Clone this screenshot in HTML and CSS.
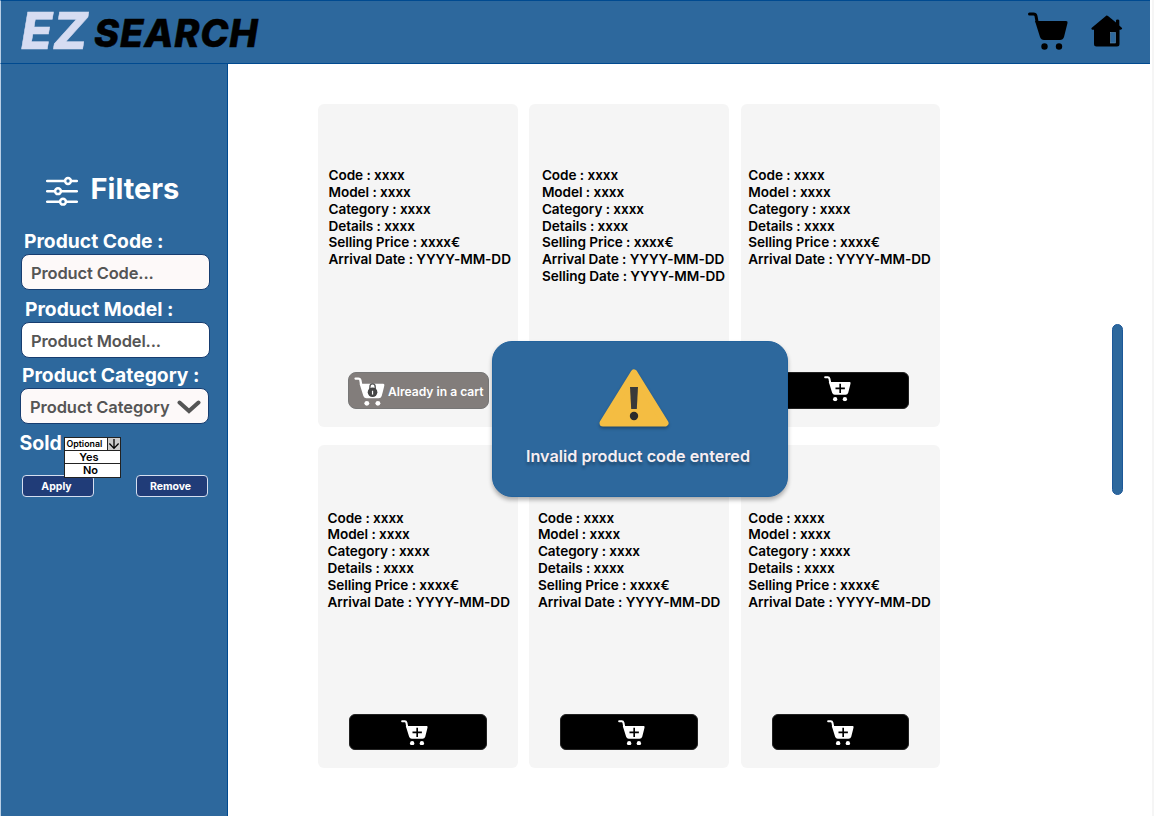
FILE: index.html
```html
<!DOCTYPE html>
<html lang="en">
<head>
<meta charset="utf-8">
<title>EZ Search</title>
<link rel="stylesheet" href="styles.css">
</head>
<body>
<svg class="defs" width="0" height="0" aria-hidden="true">
  <symbol id="cart" viewBox="0 0 40 38">
    <path d="M1.5 2H5.5Q7.5 2 8 4L9 9.500" fill="none" stroke="currentColor" stroke-width="3" stroke-linecap="round"/>
    <path d="M7 9H38Q40 9 39.500 11L36 25Q35 28 32 28H16Q13 28 12 25Z" fill="currentColor"/>
    <circle cx="16.500" cy="34.500" r="3.200" fill="currentColor"/>
    <circle cx="31" cy="34.500" r="3.200" fill="currentColor"/>
  </symbol>
  <symbol id="cart-add" viewBox="0 0 40 38">
    <use href="#cart" width="40" height="38"/>
    <path d="M24 11.500V25.500M17 18.500H31" stroke="#000" stroke-width="2.500"/>
  </symbol>
</svg>
<header class="topbar">
  <h1 class="logo"><span class="logo-ez">EZ</span><span class="logo-search">SEARCH</span></h1>
  <nav class="nav">
    <svg class="nav-cart"><use href="#cart"/></svg>
    <svg class="nav-home" viewBox="0 0 32 32"><path d="M15.500 .500Q16.200 .200 17 1L25 7.500V5.500Q25 4.500 26.500 4.500Q28.300 4.500 28.300 5.500V10.500L31 13Q31.500 14.500 29.500 14.700H28.500V29Q28.500 31.500 26 31.500H5.500Q3 31.500 3 29V14.700H1.500Q-.500 14.500 .800 12.700Z" fill="#000"/><rect x="19.500" y="17.500" width="5" height="10.500" fill="#2d689d" stroke="#5f8fb8" stroke-width=".6"/></svg>
  </nav>
</header>
<div class="layout">
  <aside class="sidebar">
    <div class="filters-head">
      <svg class="sliders" viewBox="0 0 32 30" fill="none" stroke="#fff" stroke-width="2.500" stroke-linecap="round"><path d="M1.200 5H18.500M25.500 5H30.800M1.200 15.200H8.500M15.500 15.200H30.800M1.200 25.700H13.500M20.500 25.700H30.800"/><circle cx="22" cy="5" r="2.900"/><circle cx="12" cy="15.200" r="2.900"/><circle cx="17" cy="25.700" r="2.900"/></svg>
      <h2 class="filters-title">Filters</h2>
    </div>
    <label class="label label-code">Product Code :</label>
    <div class="field field-code"><span>Product Code...</span></div>
    <label class="label label-model">Product Model :</label>
    <div class="field field-model"><span>Product Model...</span></div>
    <label class="label label-category">Product Category :</label>
    <div class="field field-category"><span>Product Category</span><svg class="chevron" viewBox="0 0 24 14"><path d="M2.500 2.500L12 11L21.500 2.500" fill="none" stroke="#555" stroke-width="4" stroke-linecap="round"/></svg></div>
    <div class="sold-row">
      <span class="sold">Sold</span>
      <div class="select">
        <div class="select-head"><span class="select-value">Optional</span><svg class="select-arrow" viewBox="0 0 13 12"><path d="M6.500 .500V10.500M1.500 5.500L6.500 10.800L11.500 5.500" fill="none" stroke="#000" stroke-width="1.400"/></svg></div>
        <div class="option option-yes">Yes</div>
        <div class="option option-no">No</div>
      </div>
    </div>
    <div class="actions"><button class="action">Apply</button><button class="action">Remove</button></div>
  </aside>
  <main class="main">
    <section class="grid">
      <article class="card c1"><p class="info">Code : xxxx<br>Model : xxxx<br>Category : xxxx<br>Details : xxxx<br>Selling Price : xxxx€<br>Arrival Date : YYYY-MM-DD</p>
        <button class="locked"><svg class="locked-icon" viewBox="0 0 40 38"><use href="#cart" width="40" height="38"/><path d="M20.500 17V13Q20.500 9 24 9Q27.500 9 27.500 13V17" fill="none" stroke="#555" stroke-width="1.800"/><circle cx="24" cy="20" r="6.300" fill="#454545"/><path d="M24 18V23" stroke="#fff" stroke-width="1.600"/></svg><span>Already in a cart</span></button></article>
      <article class="card c2"><p class="info">Code : xxxx<br>Model : xxxx<br>Category : xxxx<br>Details : xxxx<br>Selling Price : xxxx€<br>Arrival Date : YYYY-MM-DD<br>Selling Date : YYYY-MM-DD</p>
        <button class="add"><svg class="add-icon"><use href="#cart-add"/></svg></button></article>
      <article class="card c3"><p class="info">Code : xxxx<br>Model : xxxx<br>Category : xxxx<br>Details : xxxx<br>Selling Price : xxxx€<br>Arrival Date : YYYY-MM-DD</p>
        <button class="add"><svg class="add-icon"><use href="#cart-add"/></svg></button></article>
      <article class="card c4"><p class="info">Code : xxxx<br>Model : xxxx<br>Category : xxxx<br>Details : xxxx<br>Selling Price : xxxx€<br>Arrival Date : YYYY-MM-DD</p>
        <button class="add"><svg class="add-icon"><use href="#cart-add"/></svg></button></article>
      <article class="card c5"><p class="info">Code : xxxx<br>Model : xxxx<br>Category : xxxx<br>Details : xxxx<br>Selling Price : xxxx€<br>Arrival Date : YYYY-MM-DD</p>
        <button class="add"><svg class="add-icon"><use href="#cart-add"/></svg></button></article>
      <article class="card c6"><p class="info">Code : xxxx<br>Model : xxxx<br>Category : xxxx<br>Details : xxxx<br>Selling Price : xxxx€<br>Arrival Date : YYYY-MM-DD</p>
        <button class="add"><svg class="add-icon"><use href="#cart-add"/></svg></button></article>
    </section>
    <div class="scroll-thumb"></div>
  </main>
</div>
<div class="modal" role="alert">
  <svg class="warning" viewBox="0 0 72 60"><path d="M36 4L67 54H5Z" fill="#f4bd42" stroke="#f4bd42" stroke-width="7" stroke-linejoin="round"/><path d="M32 18H40L38.800 40H33.200Z" fill="#3a3a3a"/><circle cx="36" cy="47" r="4.200" fill="#2b2b2b"/></svg>
  <p class="modal-text">Invalid product code entered</p>
</div>
</body>
</html>
```
FILE: styles.css
```css
* { box-sizing: border-box; }
body { margin: 0; width: 1154px; height: 816px; overflow: hidden; position: relative; background: #fff; border-right: 2px solid #f5f5f5; font-family: Inter, "Liberation Sans", sans-serif; color: #000; }
h1, h2, p { margin: 0; }
button { font-family: inherit; padding: 0; }
svg { display: block; flex: none; }
.defs { position: absolute; }
.topbar { width: 1150px; height: 64px; background: #2d689d; border-top: 1px solid #004a90; border-bottom: 1px solid #004a90; border-left: 1px solid #b9cfe6; display: flex; justify-content: space-between; padding: 0 27px 0 20px; }
.logo { display: flex; font-style: italic; line-height: 60px; }
.logo-ez { width: 73px; font-size: 51px; font-weight: 800; letter-spacing: .5px; color: #d6dcf2; white-space: nowrap; -webkit-text-stroke: .5px #d6dcf2; }
.logo-search { font-size: 38px; font-weight: 800; padding-top: 2px; letter-spacing: .8px; -webkit-text-stroke: .5px #000; }
.nav { display: flex; gap: 23px; padding-top: 11px; }
.nav-cart { width: 40px; height: 38px; }
.nav-home { width: 32px; height: 32px; margin-top: 3px; }
.layout { display: flex; height: 752px; }
.sidebar { width: 228px; background: #2d689d; border-left: 1px solid #b9cfe6; border-right: 1px solid #004a90; padding: 107px 0 0 20px; color: #fff; }
.filters-head { display: flex; align-items: center; gap: 13px; height: 36px; padding-left: 24.500px; }
.sliders { width: 32px; height: 30px; margin-top: 4px; }
.filters-title { font-size: 29px; font-weight: 700; line-height: 36px; }
.label { display: block; font-size: 19.300px; font-weight: 700; line-height: 24px; white-space: nowrap; }
.label-code { margin: 22px 0 0 3px; }
.label-model { margin: 7px 0 0 4px; }
.label-category { margin: 5px 0 0 1px; }
.field { width: 189px; height: 36px; border: 1px solid #173d70; border-radius: 8px; background: #fff; color: #555; font-size: 16.500px; font-weight: 600; letter-spacing: -.15px; display: flex; align-items: center; padding: 1px 0 0 9px; white-space: nowrap; }
.field-code { margin-top: 1px; background: #fdf9f9; }
.field-model { margin-top: 1px; }
.field-category { margin: 1px 0 0 -1px; background: #fdf9f9; gap: 7px; letter-spacing: -.08px; }
.chevron { width: 24px; height: 14px; }
.sold-row { display: flex; height: 43px; padding-top: 7px; margin-top: 6px; }
.sold { width: 44px; margin-left: -1.500px; font-size: 19.500px; line-height: 24px; font-weight: 700; margin-top: -6px; }
.select { width: 57px; color: #000; position: relative; z-index: 1; }
.select-head { height: 13.500px; background: #fff; border: 1px solid #222; display: flex; }
.select-value { width: 43px; font-size: 8.800px; font-weight: 600; line-height: 12px; padding-left: 2px; border-right: 1px solid #222; }
.select-arrow { width: 12px; height: 12px; background: #ccc; }
.option { height: 13.500px; border: 1px solid #222; border-top: 0; background: #fff; font-size: 11px; font-weight: 600; line-height: 12.500px; text-align: center; }
.option-yes { padding-right: 6px; }
.option-no { padding-right: 3px; }
.actions { display: flex; gap: 42px; padding-left: 1px; margin-top: 2px; }
.action { width: 72px; height: 22px; background: #203c78; color: #fff; border: 1px solid #d5dff0; border-radius: 4px; font-size: 10.500px; font-weight: 700; padding-right: 3px; }
.main { flex: 1; display: flex; align-items: flex-start; padding: 39.500px 0 0 90px; }
.grid { display: grid; grid-template-columns: repeat(3, 199.500px); grid-auto-rows: 323px; gap: 18.500px 11.900px; }
.card { background: #f5f5f5; border-radius: 6px; display: flex; flex-direction: column; justify-content: space-between; padding: 63.700px 0 18px; }
.info { font-size: 13.600px; font-weight: 600; line-height: 16.800px; letter-spacing: -.06px; white-space: nowrap; padding-left: 10.500px; }
.c2 .info { padding-left: 12.500px; }
.c3 .info, .c6 .info { padding-left: 7.500px; }
.c4 .info { padding-left: 9.500px; }
.c5 .info { padding-left: 8.500px; }
.c4, .c5, .c6 { padding-top: 64.700px; }
.add { width: 137.500px; height: 36.500px; margin-left: 31px; background: #000; color: #fff; border: 1px solid #222; border-radius: 6px; display: flex; padding: 5px 0 0 50.500px; }
.c5 .add { padding-left: 57px; }
.c6 .add { padding-left: 54px; }
.c3 .add { padding: 3px 0 0 51.500px; }
.add-icon { width: 27px; height: 25.500px; }
.locked { width: 140.500px; height: 37px; margin-left: 30px; background: #827d7b; color: #fff; border: 1px solid #777; border-radius: 8px; display: flex; align-items: center; padding: 2px 0 0 5px; gap: 3px; font-size: 12.100px; font-weight: 600; white-space: nowrap; }
.locked-icon { width: 31px; height: 29px; }
.scroll-thumb { width: 11px; height: 171px; margin: 220px 0 0 171.500px; border-radius: 6px; background: #2d689d; border: 1px solid #1d5898; }
.modal { position: absolute; left: 492px; top: 341px; width: 296px; height: 156px; border-radius: 20px; background: #2d689d; border: 1px solid #23639d; box-shadow: 0 3px 4px rgba(0,0,0,.3); display: flex; flex-direction: column; align-items: center; padding-top: 27px; }
.warning { width: 72px; height: 60px; margin-right: 12px; filter: drop-shadow(0 2px 1.500px rgba(0,0,0,.3)); }
.modal-text { font-size: 16.200px; font-weight: 600; line-height: 22px; margin: 15.500px 4px 0 0; color: #f6eef2; text-shadow: 0 3px 3px rgba(0,0,0,.3); white-space: nowrap; }
```
